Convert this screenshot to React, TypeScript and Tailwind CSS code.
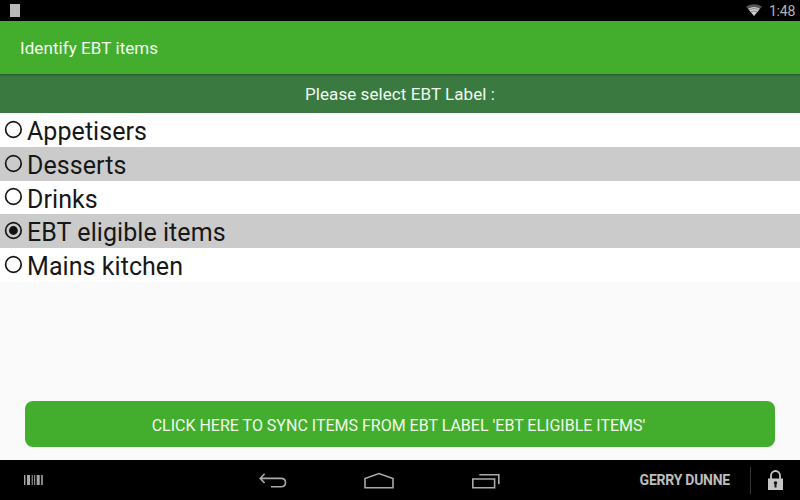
import React from "react";

const labels = ["Appetisers", "Desserts", "Drinks", "EBT eligible items", "Mains kitchen"];
const selected = "EBT eligible items";

function Radio({ checked }: { checked: boolean }) {
  return (
    <svg className="-mt-[1px] ml-[4px] h-[19px] w-[19px] shrink-0" viewBox="0 0 19 19" fill="none">
      <circle cx="9.4" cy="9.5" r="7.8" stroke="#171717" strokeWidth="1.7" />
      {checked && <circle cx="9.4" cy="9.5" r="4.4" fill="#111" />}
    </svg>
  );
}

function StatusBar() {
  return (
    <div className="flex h-[20.5px] shrink-0 items-start bg-black">
      <div className="ml-[10px] mt-[4px] h-[13px] w-[10px] bg-[#b9b9b9]" />
      <svg className="ml-auto mt-[4px] h-[12px] w-[16px]" viewBox="0 0 16 12">
        <path d="M0 2.5 Q8 -2 16 2.5 L8 12Z" fill="#555" />
        <path d="M2.1 4.8 Q8 1.2 13.9 4.8 L8 12Z" fill="#d0d0d0" />
        <path d="M3.4 5.7 Q8 3.1 12.6 5.7 M5 7.8 Q8 6.2 11 7.8" fill="none" stroke="#555" strokeWidth=".6" />
      </svg>
      <span className="ml-[7px] mr-[5px] mt-[3px] text-[14px] leading-[17px] tracking-[-0.25px] text-[#b4b4b4]">1:48</span>
    </div>
  );
}

function NavBar() {
  return (
    <nav className="flex h-[40px] shrink-0 items-center bg-black">
      <svg className="ml-[24px] h-[12px] w-[20px]" viewBox="0 0 20 12" fill="#a8a8a8">
        <path d="M0 1h1.4v10H0zM3 1h3v10H3zM7.7 1h1v10h-1zM10.2 1h1v10h-1zM12.7 1h3v10h-3zM17.2 1h1.6v10h-1.6z" />
      </svg>
      <svg className="ml-[215px] mt-[2px] h-[16px] w-[28px]" viewBox="0 0 28 16" fill="none" stroke="#a9a9a9" strokeWidth="1.6">
        <path d="M5.6 .8 1.2 5.4l4.4 4.6M1.4 5.4H22c6 0 6 8.4 0 8.4H12" />
      </svg>
      <svg className="ml-[77px] h-[17px] w-[30px]" viewBox="0 0 30 17" fill="none" stroke="#a9a9a9" strokeWidth="1.6">
        <path d="M1 15.7V6.6L15 1.5l14 5.1v9.1Z" />
      </svg>
      <svg className="ml-[78px] mt-[1px] h-[16px] w-[28px]" viewBox="0 0 28 16" fill="none" stroke="#a9a9a9" strokeWidth="1.6">
        <path d="M.8 6h21.8v8.8H.8ZM7.3 1.8h19.5v9.4" />
      </svg>
      <span className="ml-auto mr-[20px] text-[14px] font-bold leading-[20px] tracking-[-0.25px] text-[#bdbdbd]">GERRY DUNNE</span>
      <div className="h-[27px] w-px bg-[#343434]" />
      <svg className="ml-[17px] mr-[17px] h-[20px] w-[15px] shrink-0" viewBox="0 0 15 20">
        <path d="M3 9V5.5a4.5 4.5 0 0 1 9 0V9" fill="none" stroke="#c5c5c5" strokeWidth="1.8" />
        <path d="M0 8.5h15V20H0Z" fill="#c5c5c5" />
        <path d="M7.5 11.2a1.7 1.7 0 0 1 1 3.1V17.5h-2v-3.2a1.7 1.7 0 0 1 1-3.1Z" fill="#161616" />
      </svg>
    </nav>
  );
}

export default function App() {
  return (
    <main className="flex h-[500px] w-[800px] flex-col overflow-hidden bg-[#fafafa] font-[Roboto,sans-serif]">
      <StatusBar />
      <header className="relative flex h-[53px] shrink-0 items-center bg-[#43ae2e] pl-[20px] pt-[1px] shadow-[0_1px_2px_rgba(0,0,0,0.35)]">
        <h1 className="text-[17px] leading-[24px] tracking-[0.07px] text-[#f4fcee]">Identify EBT items</h1>
      </header>
      <div className="flex h-[39.7px] shrink-0 items-center justify-center bg-[#3a7a41] pt-[2px] text-[17px] tracking-[0.07px] text-[#f0faef]">
        Please select EBT Label :
      </div>
      <div role="radiogroup" className="shrink-0">
        {labels.map((label) => (
          <div key={label} role="radio" aria-checked={label === selected} className="flex h-[33.7px] items-center bg-white even:bg-[#cbcbcb]">
            <Radio checked={label === selected} />
            <span className="ml-[4px] mt-[4.4px] text-[25px] leading-[30px] tracking-[0.06px] text-[#171717]">{label}</span>
          </div>
        ))}
      </div>
      <button className="mx-[25px] mb-[13px] mt-auto h-[46px] shrink-0 rounded-[8px] bg-[#43ae2e] pr-[3px] pt-[3px] text-[16px] text-[#f1fbea]">
        CLICK HERE TO SYNC ITEMS FROM EBT LABEL 'EBT ELIGIBLE ITEMS'
      </button>
      <NavBar />
    </main>
  );
}
